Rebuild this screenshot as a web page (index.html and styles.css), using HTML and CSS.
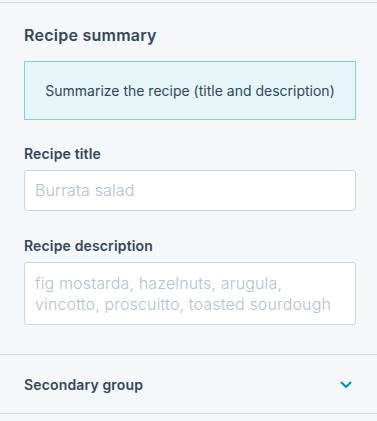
FILE: index.html
```html
<!DOCTYPE html>
<html>
<head>
<meta charset="utf-8">
<link rel="stylesheet" href="styles.css">
</head>
<body>
<div class="panel">
  <section class="group">
    <h2 class="group-title">Recipe summary</h2>
    <div class="alert">Summarize the recipe (title and description)</div>
    <div class="field field-first">
      <label class="label">Recipe title</label>
      <div class="input"><span class="placeholder">Burrata salad</span></div>
    </div>
    <div class="field">
      <label class="label">Recipe description</label>
      <div class="textarea"><span class="placeholder">fig mostarda, hazelnuts, arugula, vincotto, proscuitto, toasted sourdough</span></div>
    </div>
  </section>
  <section class="collapsed">
    <span class="collapsed-title">Secondary group</span>
    <svg class="chevron" width="12" height="8" viewBox="0 0 12 8"><path d="M1.5 1.5 L6 6 L10.5 1.5" fill="none" stroke="#0091ae" stroke-width="2" stroke-linecap="round" stroke-linejoin="round"/></svg>
  </section>
</div>
</body>
</html>
```
FILE: styles.css
```css
html, body {
  margin: 0;
  padding: 0;
  background: #f5f8fa;
}
body {
  font-family: "Inter", "Open Sans", sans-serif;
  color: #33475b;
  padding-top: 2px;
}
.panel {
  border-top: 1px solid #cbd6e2;
}
.group {
  padding: 20px 21px 29px 24px;
  border-bottom: 1px solid #cbd6e2;
}
.group-title {
  margin: 0;
  font-size: 16px;
  line-height: 24px;
  font-weight: 600;
  letter-spacing: 0.25px;
}
.alert {
  margin-top: 14px;
  height: 57px;
  display: flex;
  align-items: center;
  justify-content: center;
  background: #e5f5f8;
  border: 1px solid #7fd1de;
  font-size: 14px;
  font-weight: 400;
  letter-spacing: 0;
}
.field {
  margin-top: 25px;
}
.field-first {
  margin-top: 24px;
}
.label {
  display: block;
  font-size: 14px;
  font-weight: 600;
  line-height: 20px;
  letter-spacing: 0.15px;
}
.input, .textarea {
  margin-top: 6px;
  background: #fff;
  border: 1px solid #cbd6e2;
  border-radius: 3px;
  padding: 9px 10px;
  font-size: 16px;
  line-height: 21px;
  font-weight: 300;
  letter-spacing: 0.15px;
}
.input {
  height: 21px;
}
.textarea {
  padding: 10px 10px 9px;
  height: 42px;
}
.placeholder {
  color: #b0c1d4;
}
.collapsed {
  height: 58px;
  padding: 0 21px 0 24px;
  display: flex;
  align-items: center;
  justify-content: space-between;
  border-bottom: 1px solid #cbd6e2;
}
.collapsed-title {
  font-size: 14px;
  font-weight: 600;
  letter-spacing: 0.15px;
}
.chevron {
  margin-right: 4px;
  margin-top: 1px;
}
```
